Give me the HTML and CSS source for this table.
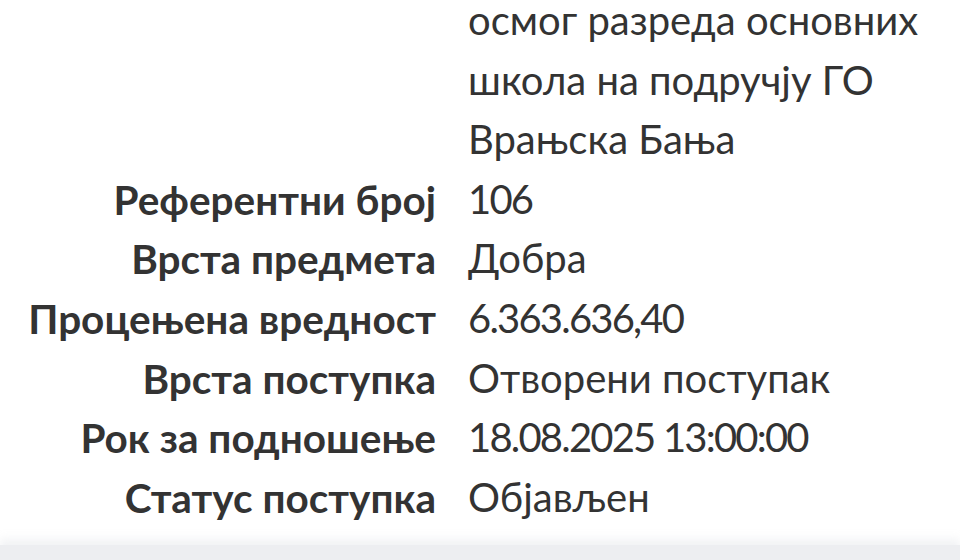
FILE: index.html
```html
<!DOCTYPE html>
<html lang="sr">
<head>
<meta charset="utf-8">
<title>Детаљи поступка</title>
<link rel="stylesheet" href="styles.css">
</head>
<body>
<main class="details">
  <dl class="info">
    <dt class="label"></dt>
    <dd class="value">осмог разреда основних школа на подручју ГО Врањска Бања</dd>
    <dt class="label">Референтни број</dt>
    <dd class="value num">106</dd>
    <dt class="label">Врста предмета</dt>
    <dd class="value">Добра</dd>
    <dt class="label">Процењена вредност</dt>
    <dd class="value num">6.363.636,40</dd>
    <dt class="label">Врста поступка</dt>
    <dd class="value">Отворени поступак</dd>
    <dt class="label">Рок за подношење</dt>
    <dd class="value num">18.08.2025 13:00:00</dd>
    <dt class="label">Статус поступка</dt>
    <dd class="value">Објављен</dd>
  </dl>
</main>
<footer class="bottom-bar"></footer>
</body>
</html>
```
FILE: styles.css
```css
html, body {
  margin: 0;
  padding: 0;
  background: #ffffff;
  overflow: hidden;
}
body {
  font-family: Lato, "Noto Sans", sans-serif;
  font-size: 40px;
  line-height: 59.6px;
  color: #333333;
}
.details {
  margin-top: -9px;
  padding-bottom: 18px;
}
.info {
  display: grid;
  grid-template-columns: 436px 1fr;
  column-gap: 32px;
  margin: 0;
}
.label {
  font-weight: 700;
  font-size: 40.5px;
  text-align: right;
  white-space: nowrap;
  margin: 0;
}
.value {
  margin: 0;
  padding-right: 24px;
}
.num {
  letter-spacing: -1.8px;
}
.bottom-bar {
  height: 40px;
  background: #edeef1;
  box-shadow: 0 -6px 8px rgba(237, 238, 241, 0.7);
}
```
